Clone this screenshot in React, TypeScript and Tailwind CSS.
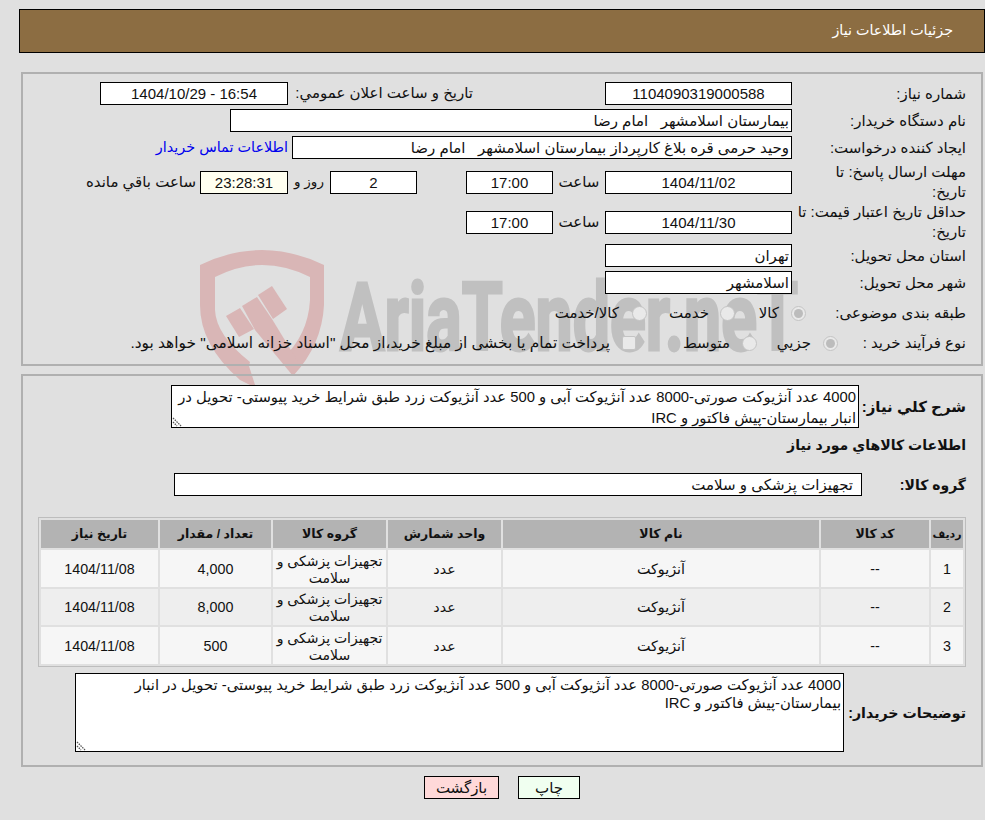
const DESC_1 = '4000 عدد آنژیوکت صورتی-8000 عدد آنژیوکت آبی و 500 عدد آنژیوکت زرد طبق شرایط خرید پیوستی- تحویل در'
const DESC_2 = 'انبار بیمارستان-پیش فاکتور و IRC'
const BUYER_1 = '4000 عدد آنژیوکت صورتی-8000 عدد آنژیوکت آبی و 500 عدد آنژیوکت زرد طبق شرایط خرید پیوستی- تحویل در انبار'
const BUYER_2 = 'بیمارستان-پیش فاکتور و IRC'

const ROWS = [
  { n: '1', qty: '4,000', h: 'h-[37px]', bg: 'bg-[#f6f6f6]' },
  { n: '2', qty: '8,000', h: 'h-[36px]', bg: 'bg-[#eeeeee]' },
  { n: '3', qty: '500', h: 'h-[37px]', bg: 'bg-[#f6f6f6]' },
]

const HEADERS = [
  { label: 'ردیف', w: 'w-[32px]', size: 'text-[11px]' },
  { label: 'کد کالا', w: 'w-[108px]', size: 'text-[12.5px]' },
  { label: 'نام کالا', w: 'w-[316px]', size: 'text-[12.5px]' },
  { label: 'واحد شمارش', w: 'w-[113px]', size: 'text-[12.5px]' },
  { label: 'گروه کالا', w: 'w-[113px]', size: 'text-[12.5px]' },
  { label: 'تعداد / مقدار', w: 'w-[111px]', size: 'text-[12.5px]' },
  { label: 'تاریخ نیاز', w: 'w-[117px]', size: 'text-[12.5px]' },
]

function Box({ w, center, bg, children }: { w: string; center?: boolean; bg?: string; children: React.ReactNode }) {
  return (
    <div
      className={`${w} h-[23px] shrink-0 border border-black ${bg ?? 'bg-white'} px-[2px] leading-[21px] whitespace-pre ${
        center ? 'text-center' : 'text-right'
      }`}
    >
      {children}
    </div>
  )
}

function Label({ w, bold, size, children }: { w: string; bold?: boolean; size?: string; children: React.ReactNode }) {
  return (
    <div className={`${w} ${size ?? ''} shrink-0 pr-[15px] leading-[20px] ${bold ? 'font-bold whitespace-nowrap' : ''}`}>
      {children}
    </div>
  )
}

function Radio({ on }: { on?: boolean }) {
  return (
    <span className="flex h-[15px] w-[15px] shrink-0 items-center justify-center rounded-full border border-[#c4c4c4] bg-[#e9e9e9]">
      {on ? <span className="h-[9px] w-[9px] rounded-full bg-[#bcbcbc]" /> : null}
    </span>
  )
}

function Grip() {
  return (
    <svg className="absolute bottom-0 left-0" width="11" height="11" viewBox="0 0 11 11">
      <path d="M1 2 L9 10 M1 6 L5 10" stroke="#555" strokeWidth="1.3" strokeDasharray="1.5 1" fill="none" />
    </svg>
  )
}

function Watermark() {
  return (
    <svg className="absolute top-0 left-0" width="985" height="820" viewBox="0 0 985 820">
      <path
        fill="#d9b6b6"
        fillRule="evenodd"
        d="M200 265 Q262 235 324 265 L324 305 Q322 345 293 376 L283 358 Q308 335 310 300 L310 277 Q262 253 215 277 L215 310 Q216 335 250 362 L249 366 L256 388 L240 380 Q200 345 200 305 Z"
      />
      <g fill="#d9b6b6">
        <path d="M226 316 L240 308 L254 329 L239 337 Z" />
        <path d="M242 306 L257 297 L272 319 L300 365 L293 376 L255 330 Z" />
        <path d="M258 295 L272 286 L287 309 L273 319 Z" />
      </g>
      <text
        x="340"
        y="350"
        direction="ltr"
        textLength="458"
        lengthAdjust="spacingAndGlyphs"
        fontFamily="Roboto, sans-serif"
        fontWeight="700"
        fontSize="94"
        fill="#c0c0c0"
        stroke="#c0c0c0"
        strokeWidth="3"
      >
        AriaTender.neT
      </text>
    </svg>
  )
}

function Details() {
  return (
    <section className="relative mr-[2px] mt-[19px] w-[962px] border-2 border-[#b0b0b0] pb-[6px] pt-[8px]">
      <div className="flex h-[23px] items-center">
        <Label w="w-[189px]">شماره نیاز:</Label>
        <Box w="w-[187px]" center>1104090319000588</Box>
        <div className="mr-[132px] w-[185px] shrink-0">تاریخ و ساعت اعلان عمومي:</div>
        <Box w="w-[188px]" center>16:54 - 1404/10/29</Box>
      </div>

      <div className="mt-[4px] flex h-[23px] items-center">
        <Label w="w-[189px]">نام دستگاه خریدار:</Label>
        <Box w="w-[562px]">بیمارستان اسلامشهر   امام رضا</Box>
      </div>

      <div className="mt-[4px] flex h-[23px] items-center">
        <Label w="w-[189px]">ایجاد کننده درخواست:</Label>
        <Box w="w-[500px]">وحید حرمی قره بلاغ کارپرداز بیمارستان اسلامشهر   امام رضا</Box>
        <a className="mr-[4px] whitespace-nowrap text-[14.4px] text-[#0000ee]">اطلاعات تماس خریدار</a>
      </div>

      <div className="mt-[4px] flex h-[38px] items-center">
        <Label w="w-[189px]">مهلت ارسال پاسخ: تا<br />تاریخ:</Label>
        <Box w="w-[187px]" center>1404/11/02</Box>
        <div className="w-[52px] shrink-0 text-center">ساعت</div>
        <Box w="w-[87px]" center>17:00</Box>
        <div className="w-[49px] shrink-0" />
        <Box w="w-[87px]" center>2</Box>
        <div className="w-[42px] shrink-0 text-center text-[13.5px]">روز و</div>
        <Box w="w-[88px]" center bg="bg-[#fffff0]">23:28:31</Box>
        <div className="mr-[4px] whitespace-nowrap">ساعت باقي مانده</div>
      </div>

      <div className="mt-[2px] flex h-[38px] items-center">
        <Label w="w-[189px]">حداقل تاریخ اعتبار قیمت: تا<br />تاریخ:</Label>
        <Box w="w-[187px]" center>1404/11/30</Box>
        <div className="w-[52px] shrink-0 text-center">ساعت</div>
        <Box w="w-[87px]" center>17:00</Box>
      </div>

      <div className="mt-[3px] flex h-[23px] items-center">
        <Label w="w-[189px]">استان محل تحویل:</Label>
        <Box w="w-[187px]">تهران</Box>
      </div>

      <div className="mt-[4px] flex h-[23px] items-center">
        <Label w="w-[189px]">شهر محل تحویل:</Label>
        <Box w="w-[187px]">اسلامشهر</Box>
      </div>

      <div className="mt-[4px] flex h-[30px] items-center">
        <Label w="w-[175px]">طبقه بندی موضوعی:</Label>
        <div className="flex w-[71px] shrink-0 items-center gap-[12px]"><Radio on /><span>کالا</span></div>
        <div className="flex w-[88px] shrink-0 items-center gap-[11px]"><Radio /><span>خدمت</span></div>
        <div className="flex items-center gap-[13px]"><Radio /><span>کالا/خدمت</span></div>
      </div>

      <div className="flex h-[30px] items-center">
        <Label w="w-[143px]">نوع فرآیند خرید :</Label>
        <div className="flex w-[81px] shrink-0 items-center gap-[12px]"><Radio on /><span>جزيي</span></div>
        <div className="flex w-[121px] shrink-0 items-center gap-[12px]"><Radio /><span>متوسط</span></div>
        <div className="flex items-center gap-[12px]">
          <span className="h-[14px] w-[14px] shrink-0 rounded-[2px] border border-[#c4c4c4] bg-[#e9e9e9]" />
          <span className="whitespace-nowrap text-[15.4px]">
            پرداخت تمام یا بخشی از مبلغ خرید،از محل "اسناد خزانه اسلامی" خواهد بود.
          </span>
        </div>
      </div>
    </section>
  )
}

function Items() {
  return (
    <section className="relative mr-[2px] mt-[8px] w-[962px] border-2 border-[#b0b0b0] pb-[13px] pt-[9px]">
      <div className="flex h-[43px] items-center">
        <Label w="w-[122px]" bold>شرح كلي نياز:</Label>
        <div className="relative h-[43px] w-[688px] shrink-0 border border-black bg-white px-[2px] pt-[1px] text-[14.8px] leading-[21px] whitespace-nowrap">
          <div>{DESC_1}</div>
          <div>{DESC_2}</div>
          <Grip />
        </div>
      </div>

      <div className="mt-[6px] h-[22px] pr-[15px] text-[14.1px] font-bold leading-[22px]">اطلاعات كالاهاي مورد نياز</div>

      <div className="mt-[17px] flex h-[23px] items-center">
        <Label w="w-[119px]" bold size="text-[14px]">گروه کالا:</Label>
        <div className="h-[23px] w-[688px] shrink-0 border border-black bg-white pr-[8px] leading-[21px]">
          تجهیزات پزشکی و سلامت
        </div>
      </div>

      <table className="mr-[15px] mt-[21px] w-[928px] table-fixed border-separate border border-[#bdbdbd] text-[14.3px] [border-spacing:2px]">
        <thead>
          <tr className="h-[28px]">
            {HEADERS.map((h) => (
              <th key={h.label} className={`${h.w} ${h.size} bg-[#b3b3b3] p-0 text-center font-bold`}>
                {h.label}
              </th>
            ))}
          </tr>
        </thead>
        <tbody>
          {ROWS.map((r) => (
            <tr key={r.n} className={r.h}>
              <td className={`${r.bg} px-0 pb-0 pt-[2px] text-center`}>{r.n}</td>
              <td className={`${r.bg} px-0 pb-0 pt-[2px] text-center`}>--</td>
              <td className={`${r.bg} px-0 pb-0 pt-[2px] text-center`}>آنژیوکت</td>
              <td className={`${r.bg} px-0 pb-0 pt-[2px] text-center`}>عدد</td>
              <td className={`${r.bg} px-0 pb-0 pt-[2px] text-center text-[14px] leading-[17px] whitespace-nowrap`}>
                تجهیزات پزشکی و<br />سلامت
              </td>
              <td className={`${r.bg} px-0 pb-0 pt-[2px] text-center`}>{r.qty}</td>
              <td className={`${r.bg} px-0 pb-0 pt-[2px] text-center`}>1404/11/08</td>
            </tr>
          ))}
        </tbody>
      </table>

      <div className="mt-[6px] flex h-[79px] items-center">
        <Label w="w-[137px]" bold size="text-[14.2px]">توضیحات خریدار:</Label>
        <div className="relative h-[79px] w-[769px] shrink-0 border border-black bg-white px-[2px] pt-[2px] text-[14.8px] leading-[18px] whitespace-nowrap">
          <div>{BUYER_1}</div>
          <div>{BUYER_2}</div>
          <Grip />
        </div>
      </div>
    </section>
  )
}

export default function App() {
  return (
    <div
      dir="rtl"
      className="relative min-h-[820px] w-[985px] overflow-hidden bg-[#e0e0e0] pt-[9px] font-['Liberation_Sans','DejaVu_Sans',sans-serif] text-[15px] text-[#111]"
    >
      <Watermark />
      <header className="relative flex h-[44px] w-[966px] items-center border border-black bg-[#8c6d42] pr-[31px] text-[14.3px] text-white">
        جزئیات اطلاعات نیاز
      </header>
      <Details />
      <Items />
      <div className="relative mt-[9px] flex gap-[19px] pr-[405px]">
        <button type="button" className="h-[23px] w-[62px] border border-black bg-[#f0fff0]">چاپ</button>
        <button type="button" className="h-[23px] w-[75px] border border-black bg-[#ffd9d9]">بازگشت</button>
      </div>
    </div>
  )
}
